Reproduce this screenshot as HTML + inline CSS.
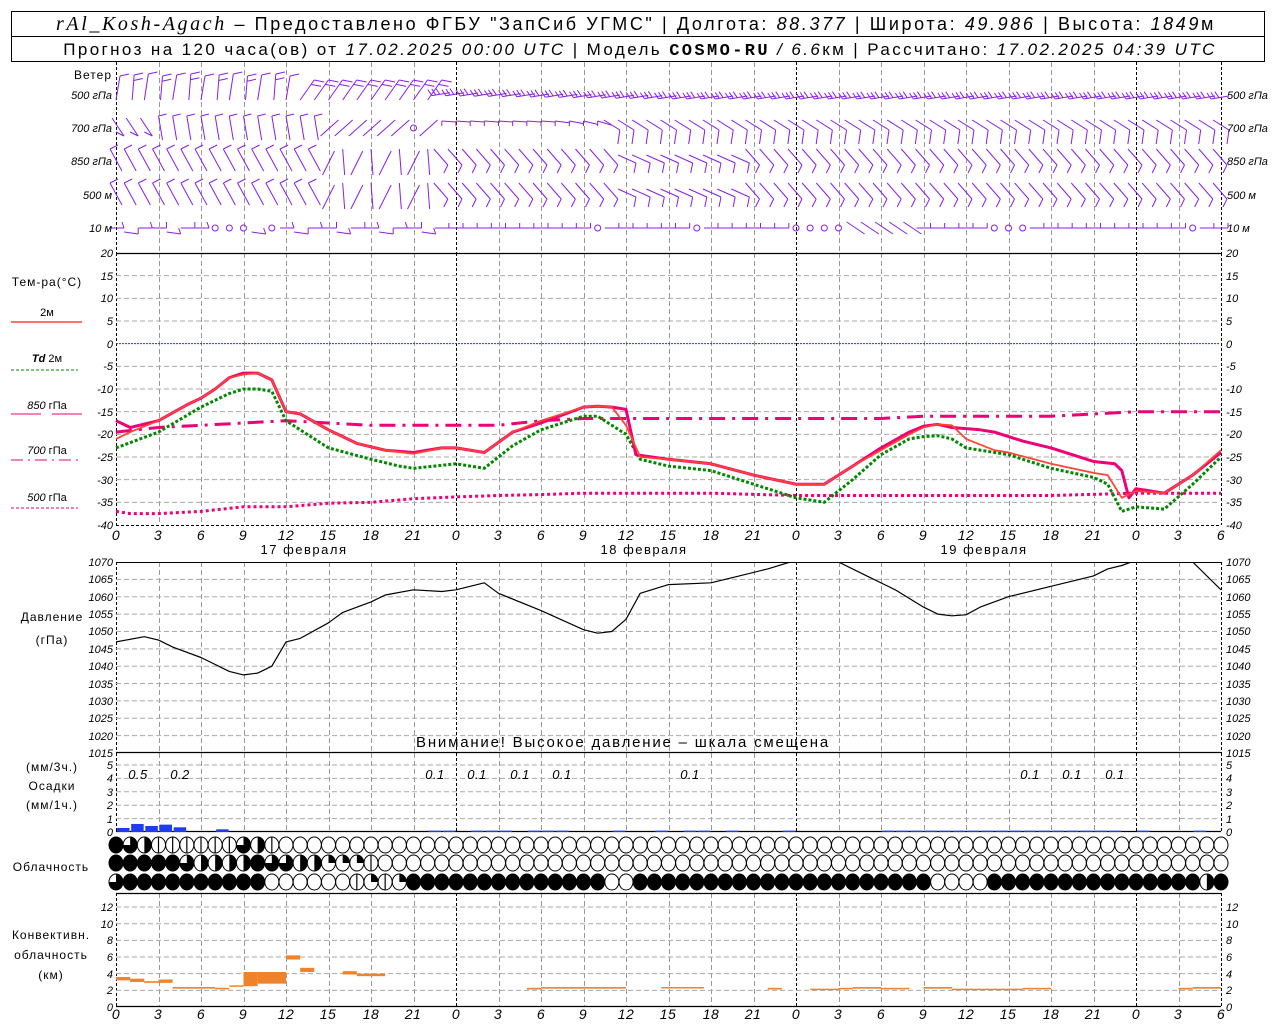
<!DOCTYPE html>
<html><head><meta charset="utf-8">
<style>
html,body{margin:0;padding:0;background:#fff;}
svg{display:block;font-family:"Liberation Sans",sans-serif;}
.t{font-size:11px;font-style:italic;fill:#000;}
.hx{font-size:14px;font-style:italic;fill:#000;letter-spacing:0.5px;}
.lb{font-size:12px;fill:#000;letter-spacing:1px;}
</style></head><body>
<svg id="s" width="1280" height="1024" viewBox="0 0 1280 1024" xmlns="http://www.w3.org/2000/svg">
<rect x="0" y="0" width="1280" height="1024" fill="#fff"/>
<rect x="11.5" y="11.5" width="1253" height="50" fill="none" stroke="#000"/>
<line x1="11" y1="36.5" x2="1265" y2="36.5" stroke="#000"/>
<text x="636" y="30" text-anchor="middle" style="font-size:18px;letter-spacing:2.6px" fill="#000"><tspan font-family="Liberation Serif" font-style="italic" font-size="20">rAl_Kosh-Agach</tspan> – Предоставлено ФГБУ "ЗапСиб УГМС" | Долгота: <tspan font-style="italic">88.377</tspan> | Широта: <tspan font-style="italic">49.986</tspan> | Высота: <tspan font-style="italic">1849</tspan>м</text>
<text x="640" y="55" text-anchor="middle" style="font-size:17px;letter-spacing:2.4px" fill="#000">Прогноз на 120 часа(ов) от <tspan font-style="italic">17.02.2025 00:00 UTC</tspan> | Модель <tspan font-family="Liberation Mono" font-weight="bold">COSMO-RU</tspan> <tspan font-style="italic">/ 6.6</tspan>км | Рассчитано: <tspan font-style="italic">17.02.2025 04:39 UTC</tspan></text>
<g id="grid"></g>
<g id="dat"></g>
<text x="112" y="79" text-anchor="end" class="lb">Ветер</text>
<g class="t" text-anchor="end">
<text x="112" y="99">500 гПа</text><text x="112" y="132">700 гПа</text><text x="112" y="165">850 гПа</text><text x="112" y="199">500 м</text><text x="112" y="232">10 м</text>
</g>
<g class="t">
<text x="1227" y="99">500 гПа</text><text x="1227" y="132">700 гПа</text><text x="1227" y="165">850 гПа</text><text x="1227" y="199">500 м</text><text x="1227" y="232">10 м</text>
</g>
<g class="t" text-anchor="end">
<text x="113" y="257">20</text><text x="113" y="280">15</text><text x="113" y="302">10</text><text x="113" y="325">5</text><text x="113" y="348">0</text><text x="113" y="370">-5</text><text x="113" y="393">-10</text><text x="113" y="416">-15</text><text x="113" y="438">-20</text><text x="113" y="461">-25</text><text x="113" y="484">-30</text><text x="113" y="506">-35</text><text x="113" y="529">-40</text>
<text x="113" y="566">1070</text><text x="113" y="583">1065</text><text x="113" y="601">1060</text><text x="113" y="618">1055</text><text x="113" y="635">1050</text><text x="113" y="653">1045</text><text x="113" y="670">1040</text><text x="113" y="688">1035</text><text x="113" y="705">1030</text><text x="113" y="722">1025</text><text x="113" y="740">1020</text><text x="113" y="757">1015</text>
<text x="113" y="769">5</text><text x="113" y="782">4</text><text x="113" y="796">3</text><text x="113" y="809">2</text><text x="113" y="823">1</text><text x="113" y="836">0</text>
<text x="113" y="911">12</text><text x="113" y="928">10</text><text x="113" y="944">8</text><text x="113" y="961">6</text><text x="113" y="978">4</text><text x="113" y="994">2</text><text x="113" y="1011">0</text>
</g>
<g class="t">
<text x="1226" y="257">20</text><text x="1226" y="280">15</text><text x="1226" y="302">10</text><text x="1226" y="325">5</text><text x="1226" y="348">0</text><text x="1226" y="370">-5</text><text x="1226" y="393">-10</text><text x="1226" y="416">-15</text><text x="1226" y="438">-20</text><text x="1226" y="461">-25</text><text x="1226" y="484">-30</text><text x="1226" y="506">-35</text><text x="1226" y="529">-40</text>
<text x="1226" y="566">1070</text><text x="1226" y="583">1065</text><text x="1226" y="601">1060</text><text x="1226" y="618">1055</text><text x="1226" y="635">1050</text><text x="1226" y="653">1045</text><text x="1226" y="670">1040</text><text x="1226" y="688">1035</text><text x="1226" y="705">1030</text><text x="1226" y="722">1025</text><text x="1226" y="740">1020</text><text x="1226" y="757">1015</text>
<text x="1226" y="769">5</text><text x="1226" y="782">4</text><text x="1226" y="796">3</text><text x="1226" y="809">2</text><text x="1226" y="823">1</text><text x="1226" y="836">0</text>
<text x="1226" y="911">12</text><text x="1226" y="928">10</text><text x="1226" y="944">8</text><text x="1226" y="961">6</text><text x="1226" y="978">4</text><text x="1226" y="994">2</text><text x="1226" y="1011">0</text>
</g>
<g class="hx" text-anchor="middle">
<text x="116" y="540">0</text><text x="158" y="540">3</text><text x="201" y="540">6</text><text x="243" y="540">9</text><text x="286" y="540">12</text><text x="328" y="540">15</text><text x="371" y="540">18</text><text x="413" y="540">21</text><text x="456" y="540">0</text><text x="498" y="540">3</text><text x="541" y="540">6</text><text x="583" y="540">9</text><text x="626" y="540">12</text><text x="668" y="540">15</text><text x="711" y="540">18</text><text x="753" y="540">21</text><text x="796" y="540">0</text><text x="838" y="540">3</text><text x="881" y="540">6</text><text x="923" y="540">9</text><text x="966" y="540">12</text><text x="1008" y="540">15</text><text x="1051" y="540">18</text><text x="1093" y="540">21</text><text x="1136" y="540">0</text><text x="1178" y="540">3</text><text x="1221" y="540">6</text>
<text x="116" y="1019">0</text><text x="158" y="1019">3</text><text x="201" y="1019">6</text><text x="243" y="1019">9</text><text x="286" y="1019">12</text><text x="328" y="1019">15</text><text x="371" y="1019">18</text><text x="413" y="1019">21</text><text x="456" y="1019">0</text><text x="498" y="1019">3</text><text x="541" y="1019">6</text><text x="583" y="1019">9</text><text x="626" y="1019">12</text><text x="668" y="1019">15</text><text x="711" y="1019">18</text><text x="753" y="1019">21</text><text x="796" y="1019">0</text><text x="838" y="1019">3</text><text x="881" y="1019">6</text><text x="923" y="1019">9</text><text x="966" y="1019">12</text><text x="1008" y="1019">15</text><text x="1051" y="1019">18</text><text x="1093" y="1019">21</text><text x="1136" y="1019">0</text><text x="1178" y="1019">3</text><text x="1221" y="1019">6</text>
</g>
<g style="font-size:13px;letter-spacing:1.5px" fill="#000" text-anchor="middle">
<text x="304" y="554">17 февраля</text><text x="644" y="554">18 февраля</text><text x="984" y="554">19 февраля</text>
</g>
<text x="47" y="286" text-anchor="middle" class="lb">Тем-ра(°С)</text>
<text x="47" y="316" text-anchor="middle" style="font-size:11px">2м</text>
<line x1="11" y1="322" x2="82" y2="322" stroke="#f44" stroke-width="1.5"/>
<text x="47" y="362" text-anchor="middle" style="font-size:11px"><tspan font-style="italic" font-weight="bold">Td</tspan>  2м</text>
<line x1="11" y1="370" x2="78" y2="370" stroke="#080" stroke-dasharray="3,2"/>
<text x="47" y="409" text-anchor="middle" style="font-size:11px"><tspan font-style="italic">850</tspan> гПа</text>
<line x1="11" y1="414" x2="41" y2="414" stroke="#e07"/><line x1="52" y1="414" x2="82" y2="414" stroke="#e07"/>
<text x="47" y="454" text-anchor="middle" style="font-size:11px"><tspan font-style="italic">700</tspan> гПа</text>
<line x1="11" y1="460" x2="78" y2="460" stroke="#e07" stroke-dasharray="12,5,2,5"/>
<text x="47" y="501" text-anchor="middle" style="font-size:11px"><tspan font-style="italic">500</tspan> гПа</text>
<line x1="11" y1="508" x2="78" y2="508" stroke="#e07" stroke-dasharray="3,2"/>
<text x="52" y="621" text-anchor="middle" class="lb">Давление</text>
<text x="52" y="644" text-anchor="middle" class="lb">(гПа)</text>
<text x="623" y="747" text-anchor="middle" style="font-size:15px;letter-spacing:1.8px" fill="#000">Внимание! Высокое давление – шкала смещена</text>
<text x="52" y="771" text-anchor="middle" class="lb">(мм/3ч.)</text>
<text x="52" y="790" text-anchor="middle" class="lb">Осадки</text>
<text x="52" y="809" text-anchor="middle" class="lb">(мм/1ч.)</text>
<g class="hx" style="font-size:13px" text-anchor="middle">
<text x="138" y="779">0.5</text><text x="180" y="779">0.2</text><text x="435" y="779">0.1</text><text x="477" y="779">0.1</text><text x="520" y="779">0.1</text><text x="562" y="779">0.1</text><text x="690" y="779">0.1</text><text x="1030" y="779">0.1</text><text x="1072" y="779">0.1</text><text x="1115" y="779">0.1</text>
</g>
<text x="51" y="871" text-anchor="middle" class="lb">Облачность</text>
<text x="51" y="939" text-anchor="middle" class="lb">Конвективн.</text>
<text x="51" y="959" text-anchor="middle" class="lb">облачность</text>
<text x="51" y="979" text-anchor="middle" class="lb">(км)</text>
</svg>
<script>
(function(){
var NS="http://www.w3.org/2000/svg",G=document.getElementById('grid'),D=document.getElementById('dat');
function el(p,n,a){var e=document.createElementNS(NS,n);for(var k in a)e.setAttribute(k,a[k]);p.appendChild(e);return e;}
function X(h){return 116+h*14.1667;}
function ln(p,x1,y1,x2,y2,c,w,da){var a={x1:x1,y1:y1,x2:x2,y2:y2,stroke:c,'stroke-width':w||1};if(da)a['stroke-dasharray']=da;return el(p,'line',a);}
var panels=[[62,253],[253,525],[562,753],[753,832],[893,1007]];
panels.forEach(function(pp){
 for(var h=0;h<=78;h+=3){var x=Math.round(X(h))+.5;var day=(h%24==0)||h==78;
  ln(G,x,pp[0],x,pp[1],day?'#000':'#999',1,day?'3,2':'5,3');}
});
for(var t=15;t>=-35;t-=5){var y=253+(20-t)*4.533;ln(G,116,y,1220,y,t==0?'#23f':'#aaa',1,t==0?'2,1':'5,3');}
for(var p=1065;p>1015;p-=5){var y=562+(1070-p)*3.473;ln(G,116,y,1220,y,'#aaa',1,'5,3');}
for(var k=1;k<=5;k++){var y=832-k*13.4;ln(G,116,y,1220,y,'#aaa',1,'5,3');}
for(var k=2;k<=12;k+=2){var y=1007-k*8.33;ln(G,116,y,1220,y,'#aaa',1,'5,3');}
[253.5,752.5,831.5,1006.5].forEach(function(y){ln(G,116,y,1221,y,'#000',1.2);});
ln(G,116,525.5,1221,525.5,'#000',1,'3,2');ln(G,116,562.5,1221,562.5,'#000',1);
ln(G,116,893.5,1221,893.5,'#000',1.2);
function path(pts,fy,c,w,da,clip){var d='';for(var i=0;i<pts.length;i+=2){d+=(i?'L':'M')+X(pts[i]).toFixed(1)+','+fy(pts[i+1]).toFixed(1);}
 var a={d:d,fill:'none',stroke:c,'stroke-width':w,'stroke-linejoin':'round'};if(da)a['stroke-dasharray']=da;if(clip)a['clip-path']='url(#cp)';return el(D,'path',a);}
var defs=el(D,'defs',{});var cp=el(defs,'clipPath',{id:'cp'});el(cp,'rect',{x:116,y:562,width:1105,height:191});
function TY(t){return 253+(20-t)*4.533;}
function PY(p){return 562+(1070-p)*3.473;}
var T2=[0,-21,1,-19.5,3,-17,5,-13.5,6,-12,7,-10,8,-7.5,9,-6.8,10,-6.5,11,-8,12,-15,13,-15.5,15,-19,17,-22,19,-23.5,21,-24.3,23,-23,24,-23,26,-24,28,-19.5,30,-17,33,-14,34,-13.8,35,-14,36,-18,37,-25,39,-25.5,42,-26.5,45,-29,48,-31,50,-31,52,-27,54,-23.5,56,-20,57,-18.5,58,-17.8,59,-18,60,-21,62,-23.5,63,-24,66,-26.5,69,-28.5,70,-29,71,-34,72,-32.5,74,-33,76,-29,78,-23.5];
var TD=[0,-23,3,-19.5,6,-14,8,-11,9,-10,10,-10,11,-10.5,12,-17,14,-21,15,-23,18,-25.5,20,-27,21,-27.5,24,-26.5,26,-27.5,28,-22.5,30,-19,33,-16,34,-16,36,-20,37,-25.5,39,-27,42,-28,45,-31,48,-34,50,-35,52,-30,54,-24.5,56,-21,57,-20.5,58,-20.3,59,-21,60,-23,63,-24.5,66,-27.5,69,-29.5,70,-31,71,-37,72,-36,74,-36.5,76,-31,78,-25];
var T85=[0,-17,1,-18.5,3,-17,5,-13.5,6,-12,7,-10,8,-7.5,9,-6.5,10,-6.5,11,-8,12,-15,13,-15.5,15,-19,17,-22,19,-23.5,21,-24,23,-23,24,-23,26,-24,28,-19.5,30,-17.5,33,-14,34,-13.8,35,-14,36,-14.5,36.7,-24.5,39,-25.5,42,-26.5,45,-29,48,-31,50,-31,52,-27,54,-23,56,-19.5,57,-18.2,58,-17.8,59,-18.5,61,-19,62,-19.5,63,-20.5,64,-21.5,66,-23,67.5,-24.5,69,-26,70.5,-26.5,71,-28,71.5,-34,72,-32,74,-33,76,-29,78,-24];
var T70=[0,-19.5,3,-18.5,6,-18,9,-17.5,12,-17,15,-17.5,18,-18,21,-18,24,-18,27,-18,30,-17,33,-16.5,36,-16.5,42,-16.5,48,-16.5,54,-16.5,57,-16,60,-16,66,-16,72,-15,78,-15];
var T50=[0,-37,1,-37.5,3,-37.5,6,-37,9,-36,12,-36,15,-35.2,18,-35,21,-34.2,24,-33.8,27,-33.5,30,-33.3,33,-33,42,-33,48,-33.5,60,-33.5,66,-33.5,72,-33,78,-33];
path(T50,TY,'#e07',3,'3,3');
path(T70,TY,'#e07',3,'16,7,3,7');
path(TD,TY,'#080',3,'3,2');
path(T85,TY,'#e07',3);
path(T2,TY,'#f43',1.8);
var P=[0,1047,2,1048.5,3,1047.5,4,1045.5,6,1042.5,8,1038.5,9,1037.5,10,1038,11,1040,12,1047,13,1048,15,1052.5,16,1055.5,18,1058.5,19,1060.5,21,1062,23,1061.5,24,1062,26,1064,27,1061,30,1056,33,1050.5,34,1049.5,35,1050,36,1053.5,37,1061,39,1063.5,42,1064,44,1066,46,1068,48,1070.5,49,1072,50,1072,51,1070,53,1066,55,1062,57,1057,58,1055,59,1054.5,60,1054.8,61,1057,63,1060,66,1063,69,1066,70,1068,71,1069,72,1070.5,75,1071,76,1070,78,1062];
path(P,PY,'#000',1.2,null,true);
var pr=[[0,0.3],[1,0.6],[2,0.45],[3,0.55],[4,0.35],[7,0.2],[22,0.1],[23,0.1],[25,0.1],[26,0.1],[27,0.1],[29,0.1],[30,0.1],[31,0.1],[35,0.1],[38,0.1],[40,0.1],[41,0.1],[43,0.1],[47,0.1],[54,0.1],[55,0.1],[56,0.1],[57,0.1],[58,0.1],[59,0.1],[60,0.1],[61,0.1],[62,0.1],[63,0.1],[64,0.1],[65,0.1],[66,0.1],[67,0.1],[68,0.1],[69,0.1],[70,0.1],[72,0.1],[76,0.1]];
pr.forEach(function(a){var h=a[1]*13.4;el(D,'rect',{x:X(a[0])+1,y:832-h,width:12.5,height:h,fill:'#1f3cf0'});});
var cc=[[0,1,3.2,3.6],[1,2,3.0,3.4],[2,3,2.9,3.1],[3,4,2.9,3.3],[4,6,2.2,2.4],[6,7,2.2,2.4],[7,8,2.2,2.3],[8,9,2.5,2.6],[9,10,2.5,4.2],[10,12,2.8,4.2],[12,13,5.7,6.2],[13,14,4.2,4.7],[16,17,3.9,4.3],[17,18,3.7,4.0],[18,19,3.7,4.0],[38.5,41.5,2.3,2.4],[29,30,2.1,2.3],[30,31,2.2,2.4],[31,35,2.2,2.4],[35,36,2.2,2.4],[46,47,2.1,2.3],[49,51,2.1,2.2],[51,52,2.2,2.3],[52,54,2.2,2.4],[54,56,2.2,2.3],[57,59,2.2,2.4],[59,64,2.1,2.2],[64,66,2.2,2.3],[75,76,2.1,2.3],[76,78,2.2,2.4]];
cc.forEach(function(a){var y1=1007-a[3]*8.33,y2=1007-a[2]*8.33;el(D,'rect',{x:X(a[0]),y:y1,width:X(a[1])-X(a[0]),height:Math.max(1.5,y2-y1),fill:'#f0832a'});});
function circ(cx,cy,f){var rx=7,ry=8;
 el(D,'ellipse',{cx:cx,cy:cy,rx:rx,ry:ry,fill:f>=1?'#000':'#fff',stroke:'#000','stroke-width':1});
 if(f>0&&f<1){
  if(f<=0.15){ln(D,cx,cy-ry,cx,cy+ry,'#000',1.2);return;}
  if(f==0.5){el(D,'path',{d:'M'+cx+','+(cy-ry)+'A'+rx+','+ry+' 0 0 1 '+cx+','+(cy+ry)+'Z',fill:'#000'});return;}
  var a=f*2*Math.PI,ex=cx+rx*Math.sin(a),ey=cy-ry*Math.cos(a);
  el(D,'path',{d:'M'+cx+','+cy+'L'+cx+','+(cy-ry)+'A'+rx+','+ry+' 0 '+(f>0.5?1:0)+' 1 '+ex.toFixed(1)+','+ey.toFixed(1)+'Z',fill:'#000'});
 }}
var r1=[1,.75,.5,.1,.1,.1,.1,.1,.1,.75,.5,.1];
var r2=[1,1,1,1,1,.75,.5,.5,.5,.5,1,.75,.75,.5,.5,.25,.25,.25,.1];
for(var h=0;h<=78;h++){
 circ(X(h),845,h<r1.length?r1[h]:0);
 circ(X(h),863,h<r2.length?r2[h]:0);
 var f3;if(h==0)f3=.75;else if(h<=10)f3=1;else if(h<=16)f3=0;else if(h==17)f3=.1;else if(h==18)f3=.25;else if(h==19)f3=.1;else if(h==20)f3=.25;else if(h<=34)f3=1;else if(h<=36)f3=0;else if(h<=57)f3=1;else if(h<=61)f3=0;else if(h==77)f3=.5;else f3=1;
 circ(X(h),882,f3);
}
var C='#8a1ee8';
function barb(x1,y1,x2,y2,tx,ty,n){ln(D,x1,y1,x2,y2,C,1);for(var i=0;i<n;i++){var k=1-i*0.22;var bx=x1+(x2-x1)*k,by=y1+(y2-y1)*k;ln(D,bx,by,bx+tx,by+ty,C,1);}}
function calm(x,y){el(D,'circle',{cx:x,cy:y,r:3,fill:'none',stroke:C,'stroke-width':1});}
for(var h=0;h<=78;h++){var x=X(h);
 if(h<13) barb(x+(h%2?2:0),100,x+4,76-(h%3),9,-2,h%2?2:1);
 else if(h<23) barb(x,100,x+14,80,10,2,2);
 else barb(x+8,96-(h<40?(40-h)*0.2:0),x-10,99-(h<40?(40-h)*0.2:0),-4,-6,3);
 if(h<3) barb(x-4,118,x+8,136,-8,-4,1);
 else if(h<15) barb(x+4,140,x,116,8,-2,1);
 else if(h<23){ if(h==21) calm(x,128); else barb(x-8,136,x+10,120,0,0,0);}
 else if(h<35) barb(x+14,122+(h>30?(h-30)*0.8:0),x,121,0,5,1);
 else barb(x-8,120,x+8,130,-2,14,1);
 [161,195].forEach(function(yy){
  if(h<15) barb(x+6,yy+10,x-6,yy-12,8,-4,1);
  else if(h<23){ if(h%2) barb(x+6,yy-10,x-6,yy+14,0,0,0); else barb(x,yy-12,x+2,yy+14,0,0,0);}
  else if((h>=36&&h<=44)) barb(x-8,yy-6,x+10,yy+2,-2,10,1);
  else barb(x-8,yy-12,x+6,yy+4,-4,8,1);
 });
 if(h==7||h==8||h==9||h==11||h==34||h==41||h==48||h==49||h==50||h==51||h==62||h==63||h==64||h==76) calm(x,228);
 else if(h<23) barb(x-6,228+(h%3==1?4:0),x+8,228+(h%3==1?6:0),(h%2?0:-2),-6,1);
 else if(h>=52&&h<=56) barb(x-6,222,x+12,234,0,0,0);
 else barb(x-7,228,x+7,228,0,-5,1);
}
})();
</script>
</body></html>
